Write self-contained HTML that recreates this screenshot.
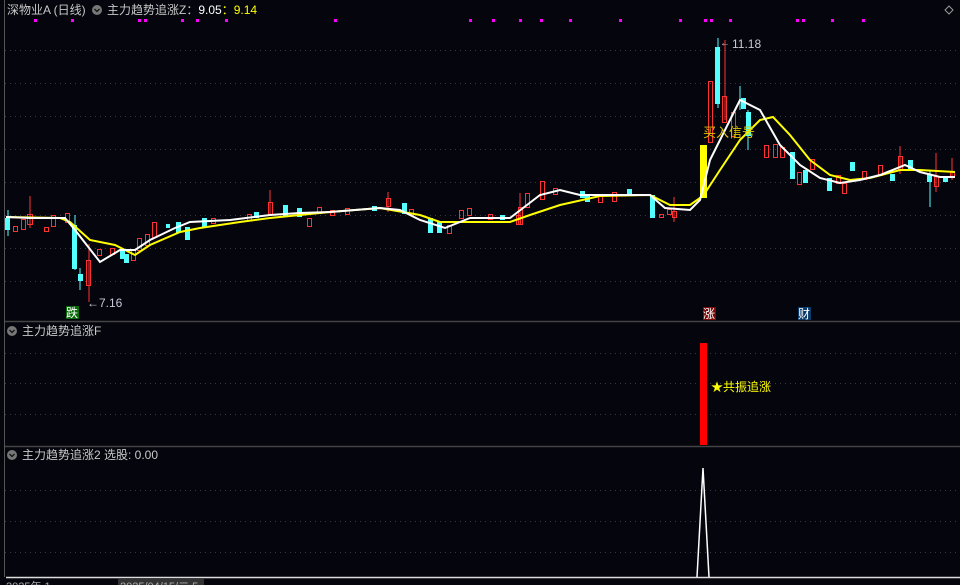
<!DOCTYPE html>
<html><head><meta charset="utf-8"><style>
html,body{margin:0;padding:0;background:#05050d;width:960px;height:585px;overflow:hidden}
svg{display:block}
text{font-family:"Liberation Sans","Noto Sans CJK SC",sans-serif}
</style></head><body>
<svg width="960" height="585" viewBox="0 0 960 585" xmlns="http://www.w3.org/2000/svg">
<rect width="960" height="585" fill="#05050d"/>
<line x1="4.5" y1="0" x2="4.5" y2="577" stroke="#555" stroke-width="1"/>
<g stroke="#3a3a44" stroke-dasharray="1 4" stroke-width="1">
<line x1="5" y1="50.5" x2="960" y2="50.5"/><line x1="5" y1="83.5" x2="960" y2="83.5"/>
<line x1="5" y1="116.5" x2="960" y2="116.5"/><line x1="5" y1="149.5" x2="960" y2="149.5"/>
<line x1="5" y1="182.5" x2="960" y2="182.5"/><line x1="5" y1="215.5" x2="960" y2="215.5"/>
<line x1="5" y1="248.5" x2="960" y2="248.5"/><line x1="5" y1="281.5" x2="960" y2="281.5"/>
<line x1="5" y1="353.5" x2="960" y2="353.5"/><line x1="5" y1="383.5" x2="960" y2="383.5"/>
<line x1="5" y1="414.5" x2="960" y2="414.5"/>
<line x1="5" y1="490.5" x2="960" y2="490.5"/><line x1="5" y1="521.5" x2="960" y2="521.5"/><line x1="5" y1="552.5" x2="960" y2="552.5"/>
</g>
<line x1="5" y1="321.5" x2="960" y2="321.5" stroke="#444" stroke-width="1.5"/>
<line x1="5" y1="446.5" x2="960" y2="446.5" stroke="#444" stroke-width="1.5"/>
<line x1="6" y1="577.5" x2="960" y2="577.5" stroke="#ddd" stroke-width="1.5"/>
<g fill="#ff00ff">
<rect x="34" y="19" width="3" height="3"/><rect x="71" y="19" width="3" height="3"/><rect x="138" y="19" width="3" height="3"/><rect x="144" y="19" width="3" height="3"/><rect x="181" y="19" width="3" height="3"/><rect x="196" y="19" width="3" height="3"/><rect x="225" y="19" width="3" height="3"/><rect x="334" y="19" width="3" height="3"/><rect x="469" y="19" width="3" height="3"/><rect x="492" y="19" width="3" height="3"/><rect x="519" y="19" width="3" height="3"/><rect x="540" y="19" width="3" height="3"/><rect x="569" y="19" width="3" height="3"/><rect x="619" y="19" width="3" height="3"/><rect x="679" y="19" width="3" height="3"/><rect x="704" y="19" width="3" height="3"/><rect x="710" y="19" width="3" height="3"/><rect x="729" y="19" width="3" height="3"/><rect x="796" y="19" width="3" height="3"/><rect x="802" y="19" width="3" height="3"/><rect x="831" y="19" width="3" height="3"/><rect x="862" y="19" width="3" height="3"/>
</g>
<g stroke-width="1">
<g stroke="#ff3232" fill="none">
<line x1="30" y1="196" x2="30" y2="228"/><rect x="27.5" y="214.5" width="5" height="10"/>
<rect x="13.5" y="226.5" width="4" height="5"/><rect x="21.5" y="219.5" width="4" height="10"/>
<rect x="44.5" y="227.5" width="4" height="4"/><rect x="51.5" y="215.5" width="4" height="11"/>
<rect x="65.5" y="213.5" width="4" height="9"/>
<line x1="89" y1="244" x2="89" y2="302"/><rect x="86.5" y="260.5" width="4" height="25"/>
<rect x="97.5" y="249.5" width="4" height="6"/><rect x="110.5" y="248.5" width="4" height="6"/>
<rect x="131.5" y="250.5" width="4" height="10"/><rect x="137.5" y="238.5" width="4" height="12"/><rect x="145.5" y="234.5" width="4" height="11"/>
<rect x="152.5" y="222.5" width="4" height="15"/><rect x="211.5" y="218.5" width="4" height="5"/>
<rect x="247.5" y="214.5" width="4" height="6"/><line x1="270" y1="190" x2="270" y2="215"/><rect x="268.5" y="202.5" width="4" height="12"/>
<rect x="307.5" y="218.5" width="4" height="8"/><rect x="317.5" y="207.5" width="4" height="6"/><rect x="330.5" y="210.5" width="4" height="5"/>
<rect x="345.5" y="208.5" width="4" height="6"/><line x1="388" y1="192" x2="388" y2="212"/><rect x="386.5" y="198.5" width="4" height="8"/>
<rect x="409.5" y="209.5" width="4" height="6"/><rect x="447.5" y="225.5" width="4" height="8"/><rect x="459.5" y="210.5" width="4" height="8"/>
<rect x="467.5" y="208.5" width="4" height="7"/><rect x="488.5" y="214.5" width="4" height="5"/><rect x="516.5" y="215.5" width="4" height="9"/>
<line x1="520" y1="193" x2="520" y2="225"/><rect x="518.5" y="207.5" width="4" height="17"/>
<rect x="525.5" y="193.5" width="4" height="14"/><rect x="540.5" y="181.5" width="4" height="18"/>
<rect x="553.5" y="188.5" width="4" height="6"/><rect x="598.5" y="195.5" width="4" height="7"/>
<rect x="612.5" y="192.5" width="4" height="9"/><rect x="659.5" y="214.5" width="4" height="3"/>
<rect x="667.5" y="209.5" width="4" height="5"/>
<line x1="674" y1="197" x2="674" y2="222"/><rect x="672.5" y="211.5" width="4" height="6"/>
<rect x="708.5" y="81.5" width="4" height="61"/>
<line x1="725" y1="40" x2="725" y2="120"/><rect x="722.5" y="96.5" width="4" height="26"/>
<rect x="731.5" y="112.5" width="4" height="24"/>
<rect x="764.5" y="145.5" width="4" height="12"/><rect x="773.5" y="144.5" width="4" height="13"/><rect x="780.5" y="147.5" width="4" height="10"/>
<rect x="797.5" y="172.5" width="4" height="12"/><rect x="810.5" y="159.5" width="4" height="10"/>
<rect x="836.5" y="175.5" width="4" height="8"/><rect x="842.5" y="183.5" width="4" height="10"/>
<rect x="862.5" y="171.5" width="4" height="8"/><rect x="878.5" y="165.5" width="4" height="10"/>
<line x1="900" y1="146" x2="900" y2="174"/><rect x="898.5" y="156.5" width="4" height="14"/>
<line x1="936" y1="153" x2="936" y2="192"/><rect x="934.5" y="176.5" width="4" height="10"/>
<line x1="952" y1="158" x2="952" y2="180"/><rect x="950.5" y="171.5" width="4" height="6"/>
</g>
<g fill="#54ffff" stroke="#54ffff">
<line x1="8" y1="210" x2="8" y2="236"/><rect x="5.5" y="218.5" width="4" height="11"/>
<line x1="75" y1="215" x2="75" y2="270"/><rect x="72.5" y="225.5" width="4" height="43"/>
<line x1="80" y1="268" x2="80" y2="290"/><rect x="78.5" y="274.5" width="4" height="6"/>
<rect x="120.5" y="250.5" width="4" height="8"/><rect x="124.5" y="254.5" width="4" height="8"/>
<rect x="166.5" y="224.5" width="3" height="3"/>
<rect x="176.5" y="222.5" width="4" height="10"/><rect x="185.5" y="227.5" width="4" height="12"/>
<rect x="202.5" y="218.5" width="4" height="8"/><rect x="254.5" y="212.5" width="4" height="5"/>
<rect x="283.5" y="205.5" width="4" height="10"/><rect x="297.5" y="208.5" width="4" height="8"/>
<rect x="372.5" y="206.5" width="4" height="4"/>
<rect x="402.5" y="203.5" width="4" height="10"/><rect x="428.5" y="218.5" width="4" height="14"/>
<rect x="437.5" y="222.5" width="4" height="10"/><rect x="500.5" y="215.5" width="4" height="4"/><rect x="580.5" y="191.5" width="4" height="6"/>
<rect x="585.5" y="196.5" width="4" height="5"/><rect x="627.5" y="189.5" width="4" height="6"/>
<rect x="650.5" y="195.5" width="4" height="22"/>
<line x1="718" y1="38" x2="718" y2="108"/><rect x="715.5" y="47.5" width="4" height="56"/>
<line x1="740" y1="86" x2="740" y2="110"/><rect x="741.5" y="98.5" width="4" height="10"/>
<line x1="748" y1="110" x2="748" y2="150"/><rect x="746.5" y="112.5" width="4" height="23"/>
<rect x="790.5" y="152.5" width="4" height="26"/><rect x="803.5" y="170.5" width="4" height="12"/>
<rect x="827.5" y="178.5" width="4" height="12"/><rect x="850.5" y="162.5" width="4" height="8"/>
<rect x="890.5" y="174.5" width="4" height="6"/><rect x="908.5" y="160.5" width="4" height="10"/>
<line x1="930" y1="170" x2="930" y2="207"/><rect x="927.5" y="174.5" width="4" height="7"/>
<rect x="943.5" y="176.5" width="4" height="5"/>
</g>
</g>
<rect x="700" y="145" width="7" height="53" fill="#ffff00"/>
<polyline fill="none" stroke="#ffff00" stroke-width="2" points="6,217 60,218 70,222 90,240 115,245 135,255 150,245 180,232 200,228 240,222 270,218 300,215 330,212 380,208 420,215 440,222 470,222 510,222 530,215 560,205 600,196 650,195 670,205 690,205 700,198 705,193 720,170 740,140 760,120 773,117 790,135 810,160 830,175 850,180 870,178 900,170 920,170 955,172"/>
<polyline fill="none" stroke="#ffffff" stroke-width="2" points="6,217 30,218 65,218 75,230 100,262 120,250 135,250 150,240 175,228 190,222 230,220 270,215 300,213 330,212 380,208 400,210 420,220 445,228 470,218 510,218 540,195 560,190 580,195 620,195 650,195 665,208 690,210 700,200 710,160 730,120 740,100 760,110 780,145 800,165 820,178 840,183 860,180 880,175 905,165 920,172 940,177 955,177"/>
<text x="732" y="48" font-size="12" fill="#c8c8d8">11.18</text>
<text x="720" y="46" font-size="10" fill="#ccc">←</text>
<text x="87" y="307" font-size="12" fill="#c8c8d8">←7.16</text>
<text x="703" y="137" font-size="13" fill="#e0c800">买入信号</text>
<rect x="66" y="306" width="13" height="13" fill="#0a6a0a"/><text x="66" y="317" font-size="12" fill="#fff">跌</text>
<rect x="703" y="307" width="13" height="13" fill="#7a0a0a"/><text x="703" y="318" font-size="12" fill="#fff">涨</text>
<rect x="798" y="307" width="13" height="13" fill="#0a3a6a"/><text x="798" y="318" font-size="12" fill="#fff">财</text>
<text x="7" y="14" font-size="12" fill="#c8c8c8">深物业A (日线)</text>
<circle cx="97" cy="10" r="5" fill="#777"/><path d="M94.5 9 L97 11.5 L99.5 9" stroke="#111" fill="none" stroke-width="1.3"/>
<text x="107" y="14" font-size="12" fill="#c8c8c8">主力趋势追涨Z：<tspan fill="#ffffff">9.05</tspan><tspan fill="#ffff00">：9.14</tspan></text>
<path d="M949 6 L953 10 L949 14 L945 10 Z" fill="none" stroke="#999"/>
<circle cx="12" cy="331" r="5" fill="#777"/><path d="M9.5 330 L12 332.5 L14.5 330" stroke="#111" fill="none" stroke-width="1.3"/>
<text x="22" y="335" font-size="12" fill="#c8c8c8">主力趋势追涨F</text>
<circle cx="12" cy="455" r="5" fill="#777"/><path d="M9.5 454 L12 456.5 L14.5 454" stroke="#111" fill="none" stroke-width="1.3"/>
<text x="22" y="459" font-size="12" fill="#c8c8c8">主力趋势追涨2 选股: 0.00</text>
<rect x="700" y="343" width="7" height="102" fill="#ff0000"/>
<text x="711" y="391" font-size="12" fill="#ffff00">★共振追涨</text>
<polyline fill="none" stroke="#fff" stroke-width="1.5" points="697,577 703,468 709,577"/>
<text x="6" y="590" font-size="11" fill="#aaa">2025年 1</text>
<rect x="118" y="579" width="86" height="6" fill="#333"/>
<text x="120" y="590" font-size="11" fill="#aaa">2025/04/15/二 5</text>
</svg>
</body></html>
